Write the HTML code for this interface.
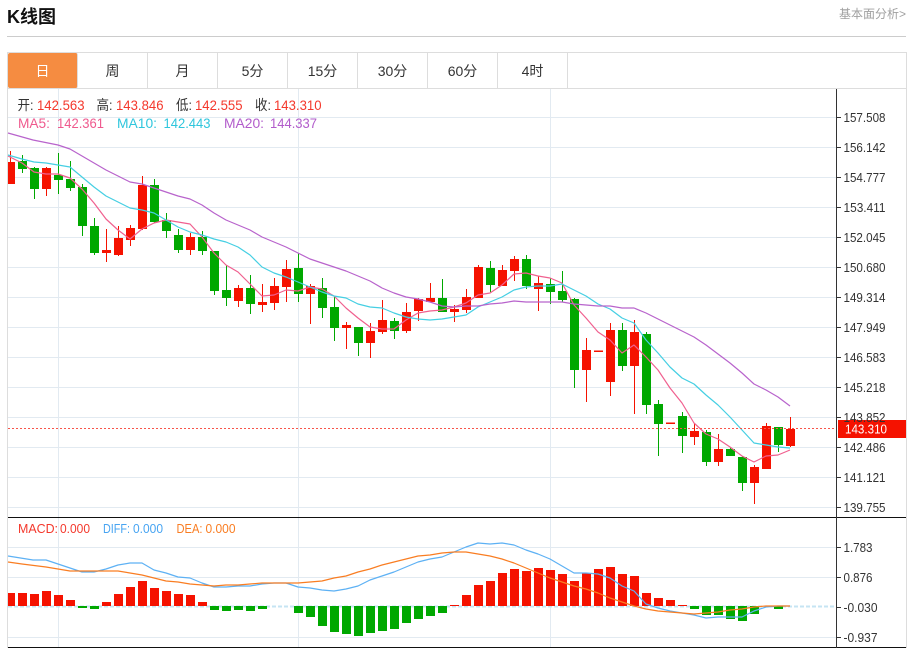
<!DOCTYPE html>
<html lang="zh"><head><meta charset="utf-8"><title>K线图</title>
<style>
html,body{margin:0;padding:0;background:#fff;width:912px;height:648px;overflow:hidden}
body{position:relative;font-family:"Liberation Sans","Noto Sans CJK SC",sans-serif}
.t{position:absolute;left:7px;top:5px;font-size:18px;font-weight:bold;line-height:24px;color:#111}
.r{position:absolute;right:6px;top:6px;font-size:12px;line-height:17px;color:#a0a0a0}
.hl{position:absolute;left:7px;top:36px;width:899px;height:1px;background:#ccc}
.tabs{position:absolute;left:7px;top:52px;width:898px;height:35px;border:1px solid #ddd}
.tab{position:absolute;top:0;width:69px;height:35px;border-right:1px solid #ddd;text-align:center;font-size:14px;line-height:36px;color:#333}
.tab.a{background:#f58c41;color:#fff;border-radius:2px;border-right-color:#ddd}
svg{position:absolute;left:0;top:0}
svg text{font-family:"Liberation Sans","Noto Sans CJK SC",sans-serif}
</style></head><body>
<div class="t">K线图</div>
<div class="r">基本面分析&gt;</div>
<div class="hl"></div>
<div class="tabs">
<div class="tab a" style="left:0">日</div>
<div class="tab" style="left:70px">周</div>
<div class="tab" style="left:140px">月</div>
<div class="tab" style="left:210px">5分</div>
<div class="tab" style="left:280px">15分</div>
<div class="tab" style="left:350px">30分</div>
<div class="tab" style="left:420px">60分</div>
<div class="tab" style="left:490px">4时</div>
</div>
<svg width="912" height="648" viewBox="0 0 912 648">
<path d="M7.500 88V648M906.500 88V648" stroke="#ddd" fill="none"/>
<path d="M8 117.500H836M8 147.500H836M8 177.500H836M8 207.500H836M8 237.500H836M8 267.500H836M8 297.500H836M8 327.500H836M8 357.500H836M8 387.500H836M8 417.500H836M8 447.500H836M8 477.500H836M8 507.500H836M8 547.500H836M8 577.500H836M8 637.500H836M58.500 89V647M298.500 89V647M550.500 89V647" stroke="#e2eaf1" fill="none"/>
<path d="M8 606.500H836" stroke="#c6e4f3" stroke-width="2" stroke-dasharray="4 2" fill="none"/>
<g fill="none" stroke="#f51200">
<path d="M10.500 151V184M46.500 167V196M106.500 229V262M118.500 226V256M130.500 225V246M142.500 176V230M190.500 233V255M238.500 285V307M262.500 284V312M274.500 278V310M286.500 260V302M310.500 284V324M346.500 322V349M370.500 323V358M382.500 300V334M406.500 303V333M418.500 298V321M430.500 283V302M454.500 305V322M466.500 289V313M478.500 265V298M502.500 265V286M514.500 256V281M538.500 276V311M586.500 338V402M610.500 323V396M634.500 320V414M694.500 423V445M718.500 434V466M754.500 465V504M766.500 423V469M790.500 417V447"/>
</g>
<path fill="#f51200" d="M8 162h7v22h-7zM42 168h9v21h-9zM102 250h9v3h-9zM114 238h9v17h-9zM126 228h9v12h-9zM138 185h9v44h-9zM186 237h9v13h-9zM234 288h9v13h-9zM258 302h9v3h-9zM270 286h9v17h-9zM282 269h9v18h-9zM306 286h9v8h-9zM342 325h9v3h-9zM366 331h9v12h-9zM378 320h9v12h-9zM402 312h9v19h-9zM414 299h9v12h-9zM426 298h9v4h-9zM450 309h9v3h-9zM462 297h9v13h-9zM474 267h9v31h-9zM498 270h9v16h-9zM510 259h9v12h-9zM534 283h9v6h-9zM582 350h9v20h-9zM594 350.500h9v1.500h-9zM606 330h9v52h-9zM630 332h9v34h-9zM666 422.500h9v1.500h-9zM690 431h9v6h-9zM714 449h9v13h-9zM750 467h9v16h-9zM762 426h9v43h-9zM786 429h9v17h-9z"/>
<g fill="none" stroke="#00a800">
<path d="M22.500 155V173M34.500 167V199M58.500 153V194M70.500 161V191M82.500 184V236M94.500 218V255M154.500 179V223M166.500 213V238M178.500 229V253M202.500 231V255M214.500 251V295M226.500 265V306M250.500 275V314M298.500 253V302M322.500 278V318M334.500 297V341M358.500 327V356M394.500 318V339M442.500 279V303M490.500 261V292M526.500 255V289M550.500 278V304M562.500 271V302M574.500 298V388M622.500 323V371M646.500 332V414M658.500 400V456M682.500 412V453M706.500 430V466M730.500 448V456M742.500 456V491M778.500 427V452"/>
</g>
<path fill="#00a800" d="M18 161h9v8h-9zM30 168h9v21h-9zM54 175h9v5h-9zM66 179h9v9h-9zM78 187h9v39h-9zM90 226h9v27h-9zM150 185h9v37h-9zM162 220h9v11h-9zM174 235h9v15h-9zM198 237h9v14h-9zM210 251h9v40h-9zM222 290h9v8h-9zM246 288h9v16h-9zM294 268h9v26h-9zM318 288h9v20h-9zM330 307h9v21h-9zM354 327h9v16h-9zM390 321h9v10h-9zM438 298h9v14h-9zM486 268h9v17h-9zM522 259h9v27h-9zM546 284h9v8h-9zM558 291h9v9h-9zM570 299h9v71h-9zM618 330h9v36h-9zM642 334h9v71h-9zM654 404h9v20h-9zM678 416h9v20h-9zM702 432h9v30h-9zM726 449h9v7h-9zM738 457h9v26h-9zM774 427h9v18h-9z"/>
<g stroke-width="1.2" fill="none" stroke-linejoin="round">
<path stroke="#f0608f" d="M8 156L22 163L34 172L46 174L58 174L70 178L82 189L94 203L106 219L118 230L130 239L142 229L154 223L166 220L178 222L190 224L202 237L214 253L226 265L238 272L250 284L262 296L274 295L286 290L298 291L310 287L322 289L334 296L346 308L358 318L370 327L382 329L394 329L406 320L418 313L430 311L442 310L454 307L466 303L478 295L490 293L502 285L514 274L526 273L538 276L550 278L562 283L574 305L586 318L598 332L610 340L622 353L634 345L646 357L658 370L670 388L682 403L694 423L706 434L718 439L730 447L742 456L754 462L766 456L778 455L790 450"/>
<path stroke="#45cfe3" d="M8 155L22 159L34 162L46 163L58 165L70 167L82 177L94 187L106 196L118 202L130 208L142 210L154 213L166 220L178 227L190 232L202 235L214 239L226 242L238 247L250 255L262 267L274 273L286 277L298 282L310 287L322 292L334 296L346 298L358 304L370 307L382 308L394 313L406 317L418 319L430 320L442 319L454 317L466 315L478 307L490 302L502 297L514 290L526 287L538 286L550 286L562 284L574 290L586 296L598 304L610 309L622 318L634 323L646 340L658 353L670 367L682 378L694 384L706 395L718 405L730 417L742 430L754 443L766 445L778 447L790 448"/>
<path stroke="#b863cc" d="M8 133L33 140L58 145L70 149L82 156L94 163L106 170L118 176L130 182L142 184L154 188L166 192L178 196L190 199L202 205L214 213L226 220L238 225L250 230L262 237L274 242L286 247L298 253L310 259L322 263L334 267L346 271L358 276L370 281L382 288L394 293L406 297L418 299L430 302L442 306L454 307L466 306L478 306L490 304L502 303L514 301L526 302L538 302L550 302L562 302L574 304L586 305L598 306L610 306L622 308L634 308L646 313L658 319L670 325L682 331L694 337L706 345L718 354L730 363L742 373L754 384L766 390L778 397L790 406"/>
</g>
<path d="M8 428.500H837" stroke="#f8554a" stroke-dasharray="2 2" fill="none"/>
<rect x="838" y="420" width="68" height="18" fill="#f51200"/>
<path fill="#f51200" d="M8 593h7v13h-7zM18 593h9v13h-9zM30 594h9v12h-9zM42 591h9v15h-9zM54 595h9v11h-9zM66 600h9v6h-9zM102 602h9v4h-9zM114 594h9v12h-9zM126 587h9v19h-9zM138 581h9v25h-9zM150 588h9v18h-9zM162 591h9v15h-9zM174 594h9v12h-9zM186 595h9v11h-9zM198 602h9v4h-9zM462 595h9v11h-9zM474 585h9v21h-9zM486 581h9v25h-9zM498 573h9v33h-9zM510 569h9v37h-9zM522 571h9v35h-9zM534 568h9v38h-9zM546 570h9v36h-9zM558 574h9v32h-9zM570 581h9v25h-9zM582 573h9v33h-9zM594 569h9v37h-9zM606 567h9v39h-9zM618 574h9v32h-9zM630 576h9v30h-9zM642 593h9v13h-9zM654 598h9v8h-9zM666 600h9v6h-9zM678 605h9v1h-9zM450 605h9v1h-9z"/>
<path fill="#00a800" d="M78 606h9v2h-9zM90 606h9v3h-9zM210 606h9v4h-9zM222 606h9v5h-9zM234 606h9v4h-9zM246 606h9v5h-9zM258 606h9v3h-9zM294 606h9v7h-9zM306 606h9v11h-9zM318 606h9v20h-9zM330 606h9v26h-9zM342 606h9v28h-9zM354 606h9v30h-9zM366 606h9v27h-9zM378 606h9v25h-9zM390 606h9v23h-9zM402 606h9v17h-9zM414 606h9v13h-9zM426 606h9v10h-9zM438 606h9v7h-9zM690 606h9v3h-9zM702 606h9v9h-9zM714 606h9v9h-9zM726 606h9v13h-9zM738 606h9v15h-9zM750 606h9v8h-9zM774 606h9v3h-9z"/>
<g stroke-width="1.2" fill="none" stroke-linejoin="round">
<path stroke="#5db1f4" d="M8 556L33 560L46 560L58 564L70 568L82 572L94 572L106 569L118 565L130 563L142 563L154 570L166 573L178 577L190 578L202 583L214 587L226 587L238 586L250 586L262 584L274 583L286 583L298 587L310 588L322 590L334 591L346 589L358 586L370 580L382 576L394 572L406 567L418 562L430 559L442 557L454 552L466 547L478 543L490 544L502 543L514 545L526 550L538 554L550 559L562 566L574 573L586 573L598 574L610 578L622 586L634 591L646 604L658 608L670 611L682 613L694 615L706 618L718 617L730 617L742 617L754 611L766 607L778 606L790 606"/>
<path stroke="#f97d22" d="M8 562L22 564L46 567L58 569L70 571L82 571L94 571L106 571L118 571L130 573L142 575L154 578L166 581L178 582L190 584L202 585L214 586L226 585L238 585L250 584L262 583L274 583L286 583L298 583L310 582L322 581L334 578L346 576L358 572L370 569L382 565L394 562L406 559L418 556L430 555L442 553L454 552L466 552L478 554L490 556L502 559L514 563L526 568L538 573L550 578L562 582L574 586L586 589L598 593L610 598L622 602L634 606L646 609L658 611L670 612L682 613L694 614L706 613L718 612L730 610L742 609L754 607L766 606L778 606L790 606"/>
</g>
<path d="M8 517.500H906M8 647.500H906" stroke="#111" fill="none"/>
<path d="M836.500 89V648" stroke="#333" fill="none"/>
<path d="M837 117.500h4M837 147.500h4M837 177.500h4M837 207.500h4M837 237.500h4M837 267.500h4M837 297.500h4M837 327.500h4M837 357.500h4M837 387.500h4M837 417.500h4M837 447.500h4M837 477.500h4M837 507.500h4M837 547.500h4M837 577.500h4M837 607.500h4M837 637.500h4" stroke="#333" fill="none"/>
<g font-size="13" fill="#333" lengthAdjust="spacingAndGlyphs">
<text x="843.500" y="122" textLength="42" lengthAdjust="spacingAndGlyphs">157.508</text>
<text x="843.500" y="152" textLength="42" lengthAdjust="spacingAndGlyphs">156.142</text>
<text x="843.500" y="182" textLength="42" lengthAdjust="spacingAndGlyphs">154.777</text>
<text x="843.500" y="212" textLength="42" lengthAdjust="spacingAndGlyphs">153.411</text>
<text x="843.500" y="242" textLength="42" lengthAdjust="spacingAndGlyphs">152.045</text>
<text x="843.500" y="272" textLength="42" lengthAdjust="spacingAndGlyphs">150.680</text>
<text x="843.500" y="302" textLength="42" lengthAdjust="spacingAndGlyphs">149.314</text>
<text x="843.500" y="332" textLength="42" lengthAdjust="spacingAndGlyphs">147.949</text>
<text x="843.500" y="362" textLength="42" lengthAdjust="spacingAndGlyphs">146.583</text>
<text x="843.500" y="392" textLength="42" lengthAdjust="spacingAndGlyphs">145.218</text>
<text x="843.500" y="422" textLength="42" lengthAdjust="spacingAndGlyphs">143.852</text>
<text x="843.500" y="452" textLength="42" lengthAdjust="spacingAndGlyphs">142.486</text>
<text x="843.500" y="482" textLength="42" lengthAdjust="spacingAndGlyphs">141.121</text>
<text x="843.500" y="512" textLength="42" lengthAdjust="spacingAndGlyphs">139.755</text>
<text x="843.500" y="552" textLength="29" lengthAdjust="spacingAndGlyphs">1.783</text>
<text x="843.500" y="582" textLength="29" lengthAdjust="spacingAndGlyphs">0.876</text>
<text x="843.500" y="612" textLength="34" lengthAdjust="spacingAndGlyphs">-0.030</text>
<text x="843.500" y="642" textLength="34" lengthAdjust="spacingAndGlyphs">-0.937</text>
</g>
<text x="845" y="433.500" font-size="13" fill="#fff" textLength="42" lengthAdjust="spacingAndGlyphs">143.310</text>
<g font-size="14">
<text x="17.500" y="110" fill="#333" textLength="16" lengthAdjust="spacingAndGlyphs">开:</text><text x="37" y="110" fill="#f4382c" textLength="47.500" lengthAdjust="spacingAndGlyphs">142.563</text>
<text x="96.500" y="110" fill="#333" textLength="16" lengthAdjust="spacingAndGlyphs">高:</text><text x="116" y="110" fill="#f4382c" textLength="47.500" lengthAdjust="spacingAndGlyphs">143.846</text>
<text x="176" y="110" fill="#333" textLength="16" lengthAdjust="spacingAndGlyphs">低:</text><text x="195" y="110" fill="#f4382c" textLength="47.500" lengthAdjust="spacingAndGlyphs">142.555</text>
<text x="255" y="110" fill="#333" textLength="16" lengthAdjust="spacingAndGlyphs">收:</text><text x="274" y="110" fill="#f4382c" textLength="47.500" lengthAdjust="spacingAndGlyphs">143.310</text>
<text x="18" y="128" fill="#ef5a8e" textLength="32" lengthAdjust="spacingAndGlyphs">MA5:</text><text x="57" y="128" fill="#ef5a8e" textLength="47" lengthAdjust="spacingAndGlyphs">142.361</text>
<text x="117" y="128" fill="#2fc6dd" textLength="40" lengthAdjust="spacingAndGlyphs">MA10:</text><text x="163.500" y="128" fill="#2fc6dd" textLength="47" lengthAdjust="spacingAndGlyphs">142.443</text>
<text x="224" y="128" fill="#b25ccb" textLength="40" lengthAdjust="spacingAndGlyphs">MA20:</text><text x="270" y="128" fill="#b25ccb" textLength="47" lengthAdjust="spacingAndGlyphs">144.337</text>
</g>
<g font-size="13">
<text x="18" y="533" fill="#f4382c" textLength="40" lengthAdjust="spacingAndGlyphs">MACD:</text><text x="60" y="533" fill="#f4382c" textLength="30" lengthAdjust="spacingAndGlyphs">0.000</text>
<text x="103" y="533" fill="#47a4f2" textLength="27" lengthAdjust="spacingAndGlyphs">DIFF:</text><text x="133" y="533" fill="#47a4f2" textLength="30" lengthAdjust="spacingAndGlyphs">0.000</text>
<text x="176.500" y="533" fill="#f97d22" textLength="26" lengthAdjust="spacingAndGlyphs">DEA:</text><text x="205.500" y="533" fill="#f97d22" textLength="30" lengthAdjust="spacingAndGlyphs">0.000</text>
</g>
</svg>
</body></html>
